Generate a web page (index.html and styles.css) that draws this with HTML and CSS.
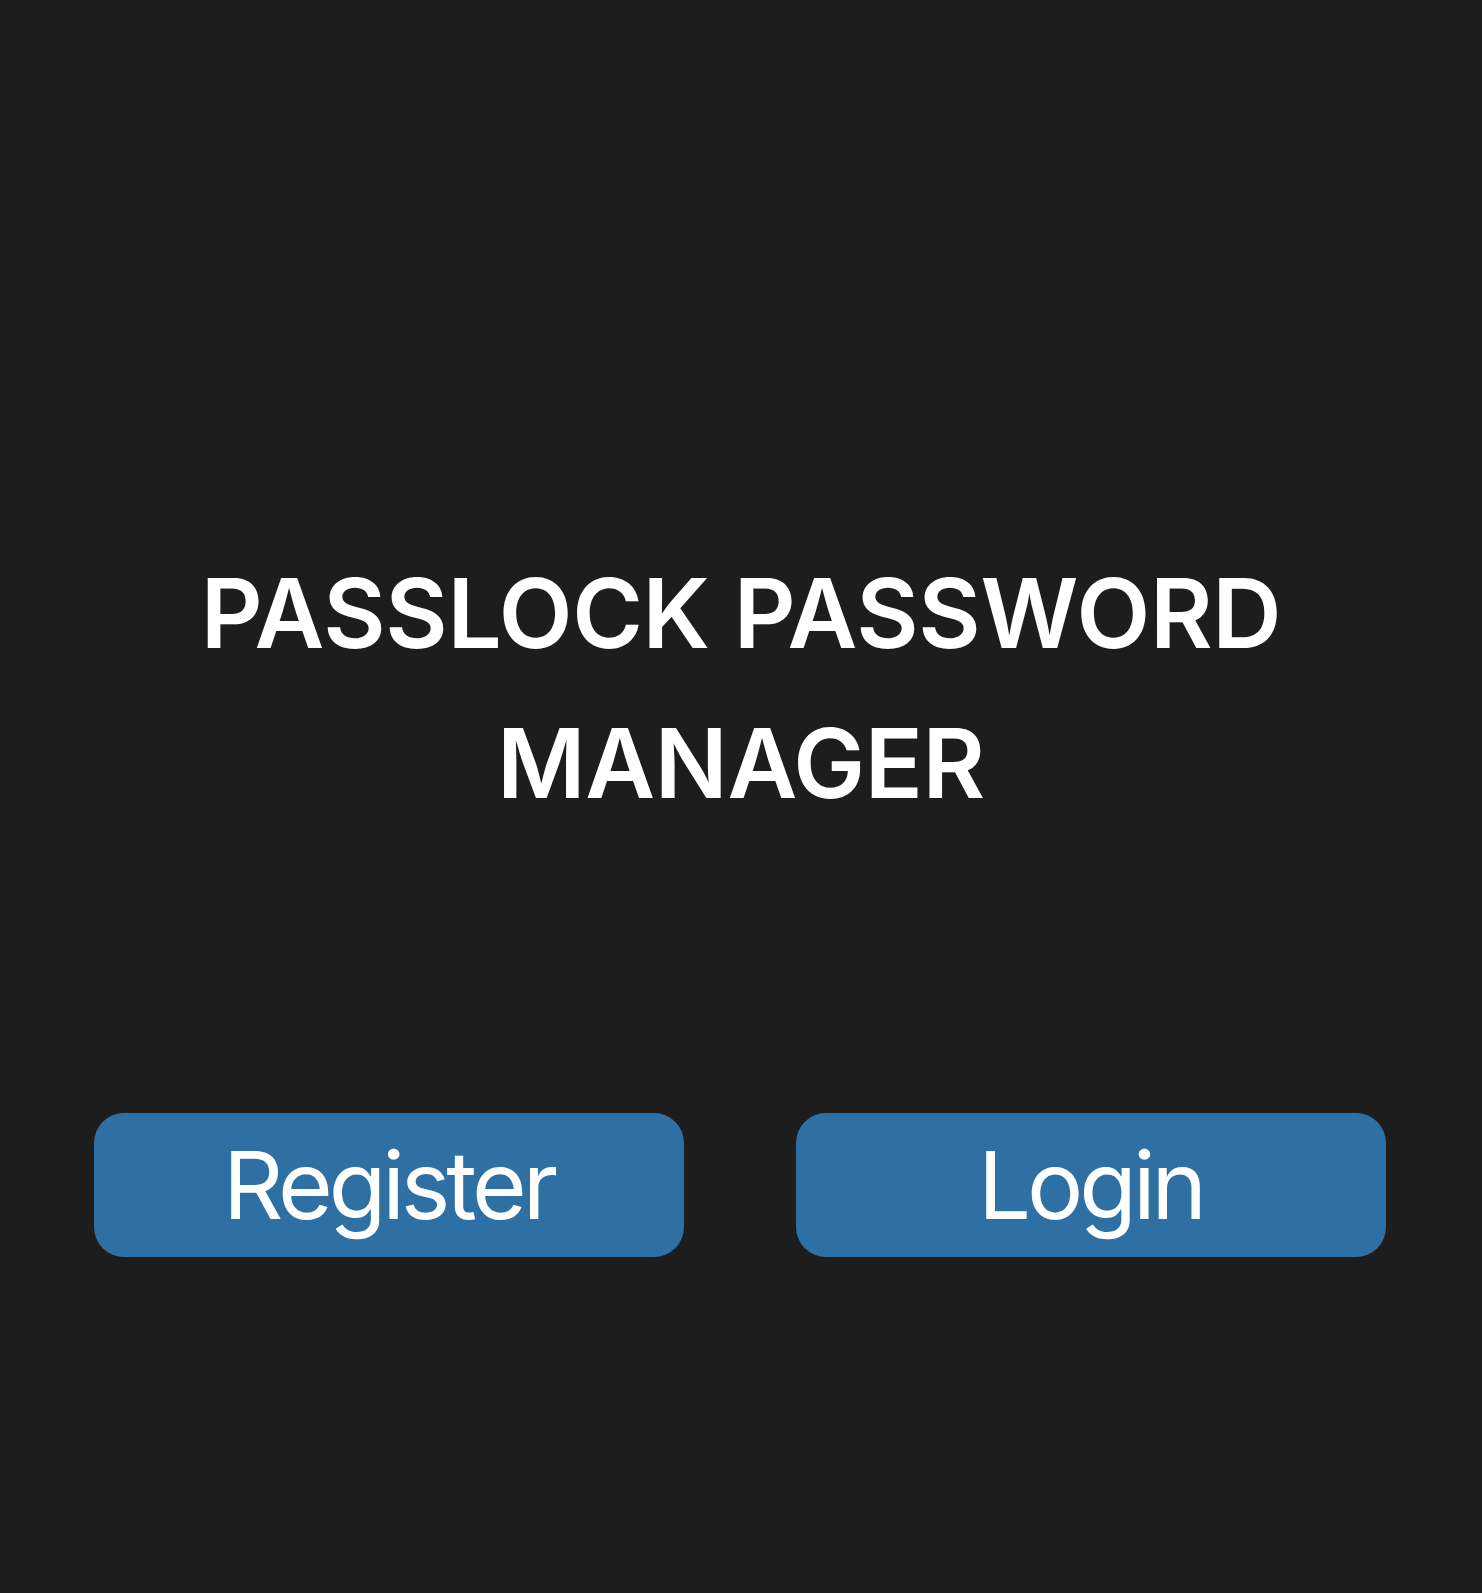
FILE: index.html
```html
<!DOCTYPE html>
<html lang="en">
<head>
<meta charset="utf-8">
<title>Passlock Password Manager</title>
<link rel="stylesheet" href="styles.css">
</head>
<body>
<main class="screen">
  <h1 class="title">PASSLOCK PASSWORD<br>MANAGER</h1>
  <div class="actions">
    <button class="btn" type="button">Register</button>
    <button class="btn" type="button">Login</button>
  </div>
</main>
</body>
</html>
```

FILE: styles.css
```css
html, body {
  margin: 0;
  padding: 0;
  background: #1d1d1d;
}
.screen {
  width: 1482px;
  height: 1593px;
  box-sizing: border-box;
  padding-top: 538px;
  display: flex;
  flex-direction: column;
  align-items: center;
  font-family: "Inter", "Roboto", sans-serif;
  color: #ffffff;
}
.title {
  margin: 0;
  font-size: 96px;
  line-height: 150px;
  font-weight: 600;
  text-align: center;
  letter-spacing: -0.3px;
}
.actions {
  margin-top: 275px;
  margin-right: 3px;
  display: flex;
  gap: 112px;
}
.btn {
  width: 590px;
  height: 144px;
  border: none;
  border-radius: 30px;
  background: #2e70a4;
  color: #ffffff;
  font-family: "Inter", "Roboto", sans-serif;
  font-size: 94px;
  font-weight: 400;
  letter-spacing: -4.1px;
  padding: 0;
  display: flex;
  align-items: center;
  justify-content: center;
}
```
